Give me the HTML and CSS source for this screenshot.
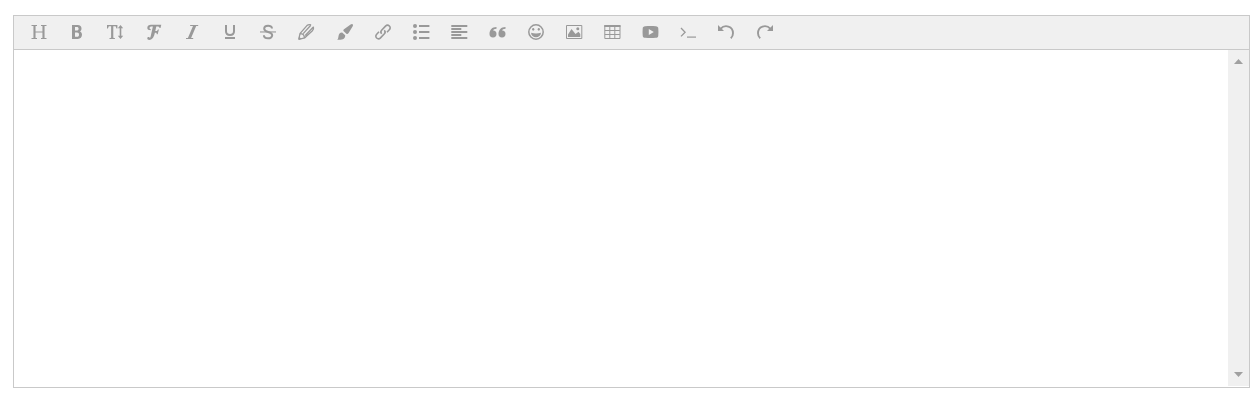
FILE: index.html
```
<!DOCTYPE html>
<html lang="en">
<head>
<meta charset="utf-8">
<title>Editor</title>
<link rel="stylesheet" href="styles.css">
</head>
<body>
<div class="editor">
  <div class="toolbar">
    <button class="tool" aria-label="Heading"><svg viewBox="0 0 16 16"><path class="line" d="M.5 1.500h5.500M10 1.500h5.500M.5 14.500h5.500M10 14.500h5.500M4 8h8" stroke-width="1.200"/><path class="line" d="M3.500 1.500v13M12.500 1.500v13" stroke-width="2.100"/></svg></button>
    <button class="tool" aria-label="Bold"><svg viewBox="0 0 16 16"><path fill-rule="evenodd" d="M3 1h5.700C11.200 1 12.500 2.500 12.500 4.500c0 1.400-.6 2.300-1.500 2.900 1.300.6 2 1.800 2 3.200C13 13.300 11.400 15 8.800 15H3zM6 3.100v3.500h1.700c1.300 0 1.900-.7 1.900-1.800 0-1.100-.6-1.700-1.900-1.700zM6 8.600v4.200h2c1.400 0 2-.8 2-2.100s-.6-2.100-2-2.100z"/></svg></button>
    <button class="tool" aria-label="Font size"><svg viewBox="0 0 16 16"><path d="M0 1h10.400v3.500h-.9L8.600 2.300H6.300v11.500l1.700.4v.8H2.400v-.8l1.700-.4V2.300H1.800L.9 4.500H0zM13.500 1L16.200 4.200h-1.900v7.600h1.900L13.500 15l-2.700-3.200h1.900V4.200h-1.900z"/></svg></button>
    <button class="tool" aria-label="Font family"><svg viewBox="0 0 16 16"><path d="M5 .8h10.300l-.8 3.200h-.9C13.300 2.800 12.500 2.400 11.300 2.400h-1L9.300 6.900h1.700l1-1.300h.9L11.700 10.300h-.9l-.4-1.600H8.900C8.100 12.300 6.700 15.900 3.200 15.900c-1.200 0-1.900-.7-1.900-1.600 0-.9.600-1.400 1.300-1.400.8 0 1.100.5 1.200 1.200C4.600 13.800 4.700 12 5.400 9L6.900 2.400H6C4.200 2.400 3.500 3.100 3.500 4.100c0 .7.600 1 1.300 1.200l-.2.9C2.700 6.200 1.300 5.500 1.300 4 1.300 2 2.900.8 5 .8z"/></svg></button>
    <button class="tool" aria-label="Italic"><svg viewBox="0 0 16 16"><path d="M6.200 1H14.200v1.100H12.200L7.100 13.900H9.200V15H2v-1.100h1.900L9 2.100H6.100z"/></svg></button>
    <button class="tool" aria-label="Underline"><svg viewBox="0 0 16 16"><path class="line" d="M4 1v6.300c0 4.900 8 4.900 8 0V1" stroke-width="2"/><path d="M3 13h10v2H3z"/></svg></button>
    <button class="tool" aria-label="Strikethrough"><svg viewBox="0 0 16 16"><path class="line" d="M12 4.500C12 .8 4.200.7 4.200 4.700c0 1.900 1.600 2.600 4 3.300 2.500.7 4 1.500 4 3.300 0 4.100-8.300 3.900-8.300-.1" stroke-width="2"/><path d="M0 7.400h16v1.100H0z"/></svg></button>
    <button class="tool" aria-label="Text color"><svg viewBox="0 0 16 16"><path class="line" d="M.8 15.300L2 9.500 8.900 1.600C10.200.5 11.600.4 13.100.8M.8 15.300l5.900-1.500 7.700-7c1.200-1.200 1.400-2.500 1-4.100M2.200 9.700c2.200 0 4 1.800 4.200 3.900M5.200 9.600l7.600-8.400M7.200 11.500l7.900-8.200" stroke-width="1.300"/><path d="M.3 15.700L1 12.500 3.500 15z"/></svg></button>
    <button class="tool" aria-label="Background color"><svg viewBox="0 0 16 16"><path d="M15.600.3c.5.5.5 1.200.1 1.900L11.600 9c-.6.9-1.500 1.200-2.200.7L6.700 7.300c-.6-.7-.4-1.400.3-2.100L13.600.5c.8-.5 1.500-.7 2-.2zM5.200 8.400l3 2.800c.2 3.500-2.500 5-8.200 4.500 1.400-.7 1.200-1.900 1.500-3.500.3-2.500 1.400-3.900 3.700-3.800z"/></svg></button>
    <button class="tool" aria-label="Link"><svg viewBox="0 0 16 16"><path class="line" d="M6.700 9.700c-1-1-1-2.500-.1-3.500l3.900-4.100C13.100-.4 16.900 3.200 14.300 5.800L12 8.200M9.300 6.300c1 1 1 2.500.1 3.500l-3.900 4.100c-2.600 2.500-6.400-1.100-3.800-3.700L4 7.800" stroke-width="1.600"/></svg></button>
    <button class="tool" aria-label="List"><svg viewBox="0 0 16 16"><circle cx="2" cy="2" r="2"/><circle cx="2" cy="8" r="2"/><circle cx="2" cy="14" r="2"/><path d="M6 1h10.400v2H6zM6 7h10.400v2H6zM6 13h10.400v2H6z"/></svg></button>
    <button class="tool" aria-label="Align left"><svg viewBox="0 0 16 16"><path d="M.3 1h16v2h-16zM.3 4h10v2h-10zM.3 7h16v2h-16zM.3 10h10v2h-10zM.3 13h16v2h-16z"/></svg></button>
    <button class="tool" aria-label="Quote"><svg viewBox="0.500 0 16 16" class="shifted"><path d="M4.600 6.500a3.500 3.500 0 1 1-3.600 3.500C1 5.800 3.500 3 8 3v1.700C5.800 4.700 5 5.500 4.600 6.500zM13.600 6.500A3.500 3.500 0 1 1 10 10C10 5.800 12.500 3 17 3v1.700c-2.200 0-3 .8-3.400 1.800z"/></svg></button>
    <button class="tool" aria-label="Emoticon"><svg viewBox="0 0 16 16"><circle class="line" cx="8" cy="8" r="7.200" stroke-width="1.500"/><ellipse cx="5.200" cy="5.300" rx="1.100" ry="1.400"/><ellipse cx="10.800" cy="5.300" rx="1.100" ry="1.400"/><path d="M3 8.700c3.200 1 6.800 1 10 0C12.700 11.500 10.700 13.200 8 13.200S3.300 11.500 3 8.700z"/></svg></button>
    <button class="tool" aria-label="Image"><svg viewBox="0 0 16 16"><path class="line" d="M.5 1.500h15.300v13H.5z"/><circle cx="11.800" cy="4.700" r="1.500"/><path d="M2 13V10.500L5.500 5l4 5 3-2.300L14.300 10v3z"/></svg></button>
    <button class="tool" aria-label="Table"><svg viewBox="0 0 16 16"><path class="line" d="M.8 1.500h15.200v13H.8zM.8 6.500h15M.8 10.500h15M5.800 2v12.500M10.800 2v12.500"/><path d="M.3 1h16.200v2H.3z"/></svg></button>
    <button class="tool" aria-label="Video"><svg viewBox="-0.500 0 16 16"><path fill-rule="evenodd" d="M2.700 2.200C6 1.900 10 1.900 13.300 2.200 15.100 2.300 15.700 3 15.800 4.600q.3 3.400 0 6.800c-.1 1.600-.7 2.300-2.500 2.400-3.300.3-7.300.3-10.600 0C.9 13.700.3 13 .2 11.400q-.3-3.400 0-6.800C.3 3 .9 2.300 2.700 2.200zM6.300 5v6l5-3z"/></svg></button>
    <button class="tool" aria-label="Code"><svg viewBox="0 0 16 16"><path class="line" d="M1 4l4.100 4.200L1 12.400" stroke-width="1.300"/><path d="M7 12.500h9v1.200H7z"/></svg></button>
    <button class="tool" aria-label="Undo"><svg viewBox="0 0 16 16"><path class="line" d="M2.500 4.900C7-.2 15 2.300 15 9.200c0 2-.8 3.800-2.200 5" stroke-width="1.900"/><path d="M0 1v6h6z"/></svg></button>
    <button class="tool" aria-label="Redo"><svg viewBox="0 0 16 16"><path class="line" d="M13.500 4.900C9-.2 1 2.300 1 9.200c0 2 .8 3.800 2.200 5" stroke-width="1.900"/><path d="M16 1v6h-6z"/></svg></button>
  </div>
  <div class="content">
    <div class="page" contenteditable="true"></div>
    <div class="scrollbar">
      <svg class="arrow" viewBox="0 0 9 5"><path d="M4.500 0L9 5H0z"/></svg>
      <svg class="arrow" viewBox="0 0 9 5"><path d="M0 0h9L4.500 5z"/></svg>
    </div>
  </div>
</div>
</body>
</html>
```
FILE: styles.css
```
body {
  margin: 0;
  background: #fff;
  font-family: "Liberation Sans", Arial, sans-serif;
}
.editor {
  box-sizing: border-box;
  width: 1237px;
  height: 373px;
  margin: 15px 0 0 13px;
  border: 1px solid #c9c9c9;
  display: flex;
  flex-direction: column;
}
.toolbar {
  box-sizing: border-box;
  height: 34px;
  flex: none;
  display: flex;
  align-items: flex-start;
  padding: 0 6px;
  background: #f0f0f0;
  border-bottom: 1px solid #c9c9c9;
}
.tool {
  box-sizing: border-box;
  width: 38.2px;
  height: 32px;
  padding: 0;
  border: 0;
  background: none;
  display: flex;
  align-items: center;
  justify-content: center;
}
.tool svg {
  width: 16px;
  height: 16px;
  fill: #999;
  overflow: visible;
}
.tool .line {
  fill: none;
  stroke: #999;
}
.content {
  flex: 1;
  display: flex;
  padding-bottom: 1px;
}
.page {
  flex: 1;
  outline: none;
}
.scrollbar {
  box-sizing: border-box;
  width: 21px;
  padding: 9px 0 9px 6px;
  background: #f0f0f0;
  display: flex;
  flex-direction: column;
  justify-content: space-between;
}
.arrow {
  width: 9px;
  height: 5px;
  fill: #a0a0a0;
}
```
